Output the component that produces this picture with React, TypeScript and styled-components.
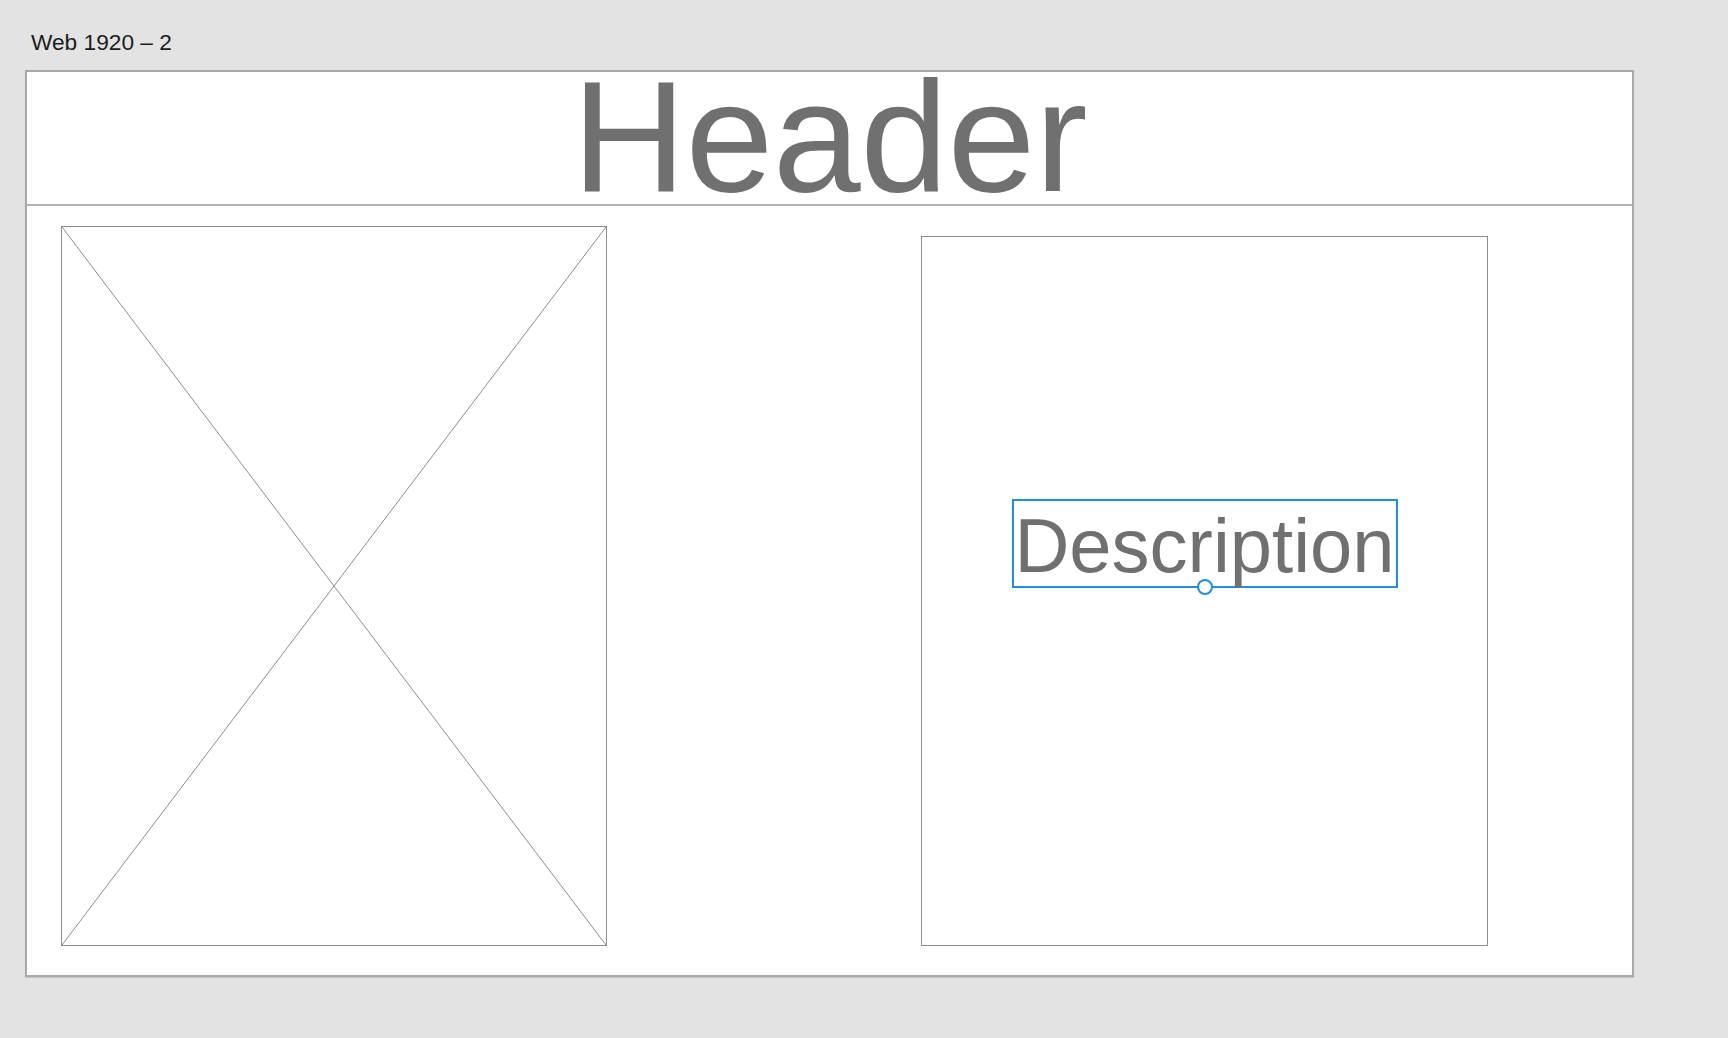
import styled, { createGlobalStyle } from "styled-components";

const GlobalStyle = createGlobalStyle`
  html, body {
    margin: 0;
    padding: 0;
    background: #e3e3e3;
  }
  body {
    font-family: "Liberation Sans", Arial, sans-serif;
    min-height: 1038px;
  }
`;

export default function App() {
  return (
    <Page>
      <GlobalStyle />
      <ArtboardLabel>Web 1920 – 2</ArtboardLabel>
      <Artboard>
        <Header>
          <HeaderTitle>Header</HeaderTitle>
        </Header>
        <Content>
          <ImagePlaceholder>
            <svg width="100%" height="100%" preserveAspectRatio="none" viewBox="0 0 100 100">
              <line x1="0" y1="0" x2="100" y2="100" stroke="#8e8e8e" strokeWidth="1" vectorEffect="non-scaling-stroke" />
              <line x1="100" y1="0" x2="0" y2="100" stroke="#8e8e8e" strokeWidth="1" vectorEffect="non-scaling-stroke" />
            </svg>
          </ImagePlaceholder>
          <DescriptionCard>
            <Selection>
              <Description>Description</Description>
              <Handle />
            </Selection>
          </DescriptionCard>
        </Content>
      </Artboard>
    </Page>
  );
}

const Page = styled.div`
  padding-top: 29px;
`;

const ArtboardLabel = styled.div`
  padding-left: 31px;
  font-size: 22.7px;
  line-height: 26px;
  color: #1c1c1c;
  margin-bottom: 15px;
`;

const Artboard = styled.div`
  box-sizing: border-box;
  margin-left: 25px;
  width: 1609px;
  height: 907px;
  background: #fff;
  border: 2px solid #a8a8a8;
  box-shadow: 0 1px 1px rgba(0, 0, 0, 0.12);
  display: flex;
  flex-direction: column;
`;

const Header = styled.header`
  height: 132px;
  border-bottom: 2px solid #b3b3b3;
  display: flex;
  justify-content: center;
`;

const HeaderTitle = styled.h1`
  margin: 0;
  font-weight: 400;
  font-size: 158px;
  line-height: 128px;
  letter-spacing: -0.5px;
  color: #707070;
`;

const Content = styled.section`
  flex: 1;
  display: flex;
  align-items: flex-end;
  gap: 314px;
  padding: 0 0 29px 34px;
`;

const ImagePlaceholder = styled.div`
  box-sizing: border-box;
  width: 546px;
  height: 720px;
  border: 1px solid #8c8c8c;
  svg {
    display: block;
  }
`;

const DescriptionCard = styled.div`
  box-sizing: border-box;
  width: 567px;
  height: 710px;
  border: 1px solid #8c8c8c;
  display: flex;
  flex-direction: column;
  align-items: center;
  padding-top: 262px;
`;

const Selection = styled.div`
  position: relative;
  box-sizing: border-box;
  width: 386px;
  height: 89px;
  border: 2px solid #1e8fe3;
  display: flex;
  justify-content: center;
`;

const Description = styled.p`
  margin: 1px 0 0;
  font-size: 76px;
  line-height: 88px;
  color: #707070;
  white-space: nowrap;
`;

const Handle = styled.span`
  position: absolute;
  left: 50%;
  bottom: -9px;
  width: 12px;
  height: 12px;
  margin-left: -8px;
  border: 2px solid #1e8fe3;
  border-radius: 50%;
  background: #fff;
`;
